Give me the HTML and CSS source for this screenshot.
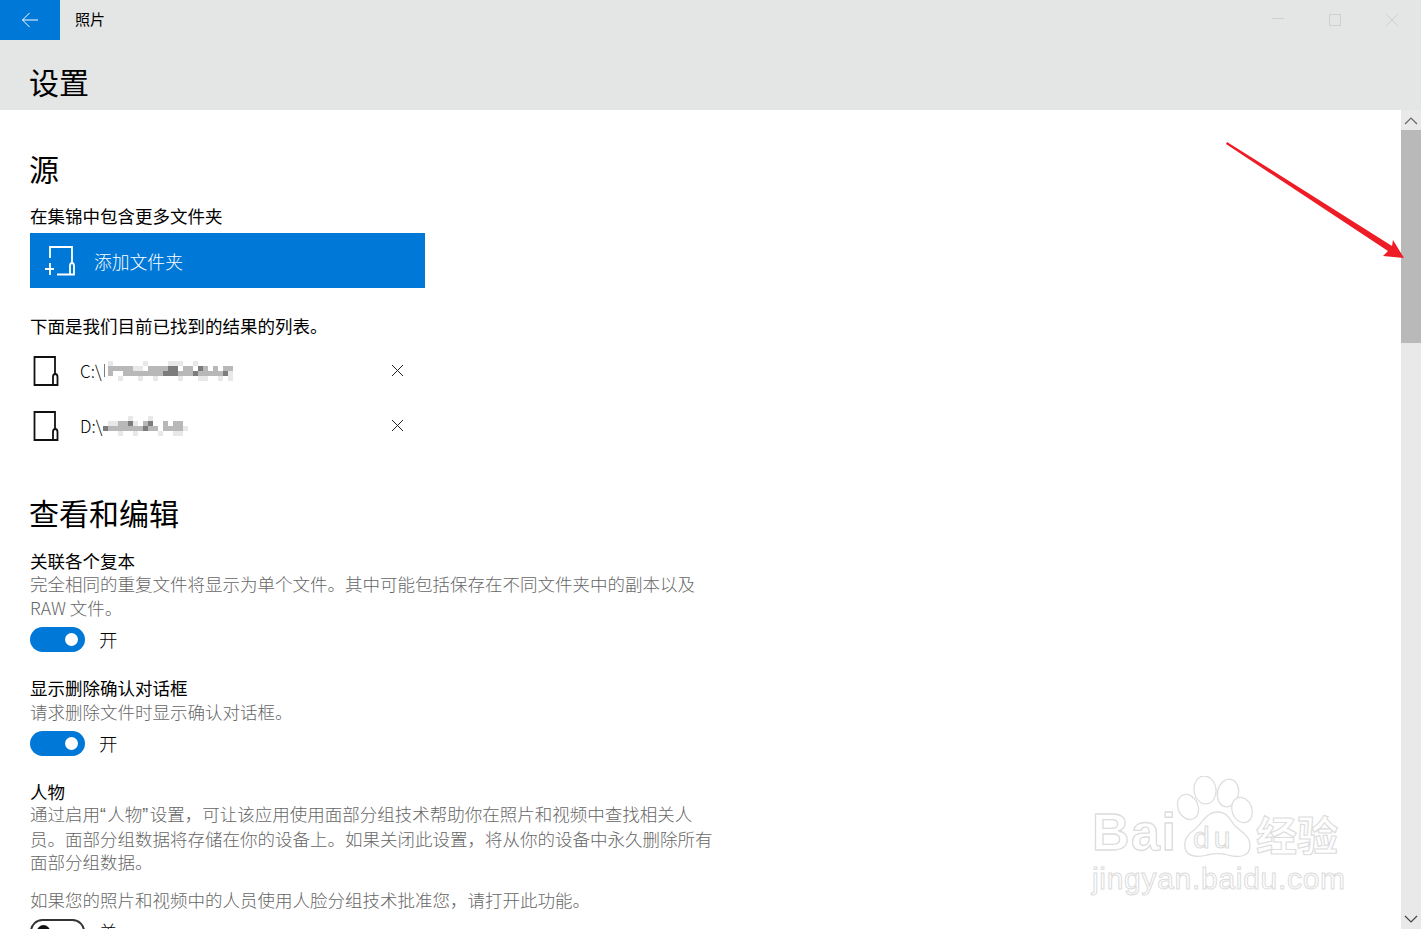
FILE: index.html
```html
<!DOCTYPE html>
<html lang="zh-CN">
<head>
<meta charset="utf-8">
<title>照片 设置</title>
<link rel="stylesheet" href="styles.css">
</head>
<body>
<div class="app">
  <header class="chrome">
    <div class="titlebar">
      <button class="back" aria-label="返回">
        <svg width="18" height="16" viewBox="0 0 18 16"><path d="M8.500 1 1.500 8l7 7M1.500 8H17" fill="none" stroke="#fff" stroke-width="1"/></svg>
      </button>
      <span class="app-name">照片</span>
      <div class="win-controls">
        <svg width="14" height="14" viewBox="0 0 14 14"><path d="M1 5.500H13" stroke="#cfcfcf" fill="none"/></svg>
        <svg width="14" height="14" viewBox="0 0 14 14"><rect x="1.500" y="1.500" width="11" height="11" stroke="#cfcfcf" fill="none"/></svg>
        <svg width="14" height="14" viewBox="0 0 14 14"><path d="M1 1 13 13M13 1 1 13" stroke="#cfcfcf" fill="none"/></svg>
      </div>
    </div>
    <h1 class="page-title">设置</h1>
  </header>
  <div class="body">
    <main class="content">
      <h2 class="section-title first">源</h2>
      <p class="label include-label">在集锦中包含更多文件夹</p>
      <button class="add-folder">
        <svg width="32" height="32" viewBox="0 0 32 32"><path d="M6 13V2H28V17M1 24H10M6 18V30M13 29.500H26M26 29.500V21C26 17 30 17 30 21V29.500H26" fill="none" stroke="#fff" stroke-width="1.800"/></svg>
        <span>添加文件夹</span>
      </button>
      <p class="label found-label">下面是我们目前已找到的结果的列表。</p>
      <ul class="folders">
        <li class="folder">
          <svg class="folder-icon" width="26" height="32" viewBox="0 0 26 32"><path d="M20 30H1.500V2H22V19M20 30V22C20 18 24.500 18 24.500 22V30H20" fill="none" stroke="#111" stroke-width="1.800"/></svg>
          <span class="path">C:\</span>
          <svg class="mosaic" width="130" height="20" viewBox="-5 0 130 20" shape-rendering="crispEdges">
            <path class="m3" d="M-4 3h1v13h-1z"/>
            <path class="m1" d="M0 0h5v5h-5zM35 0h5v5h-5zM60 0h15v5h-15zM85 0h5v5h-5zM25 5h10v5h-10zM10 15h5v5h-5zM30 15h5v5h-5zM45 15h5v5h-5zM70 15h5v5h-5zM90 15h10v5h-10zM110 15h5v5h-5zM120 10h5v5h-5zM120 15h5v5h-5z"/>
            <path class="m2" d="M0 5h25v5h-25zM40 5h20v5h-20zM75 5h10v5h-10zM95 5h5v5h-5zM105 5h5v5h-5zM115 5h10v5h-10zM0 10h5v5h-5zM15 10h40v5h-40zM70 10h15v5h-15zM90 10h25v5h-25z"/>
            <path class="m3" d="M60 5h10v5h-10zM90 5h5v5h-5zM55 10h15v5h-15zM85 10h5v5h-5zM115 10h5v5h-5z"/>
          </svg>
          <svg class="remove" width="13" height="13" viewBox="0 0 13 13"><path d="M1 1 12 12M12 1 1 12" stroke="#222" fill="none"/></svg>
        </li>
        <li class="folder">
          <svg class="folder-icon" width="26" height="32" viewBox="0 0 26 32"><path d="M20 30H1.500V2H22V19M20 30V22C20 18 24.500 18 24.500 22V30H20" fill="none" stroke="#111" stroke-width="1.800"/></svg>
          <span class="path">D:\</span>
          <svg class="mosaic" width="85" height="20" viewBox="0 0 85 20" shape-rendering="crispEdges">
            <path class="m1" d="M25 0h5v5h-5zM45 0h5v5h-5zM5 5h10v5h-10zM30 5h5v5h-5zM15 15h5v5h-5zM30 15h5v5h-5zM55 15h5v5h-5zM70 15h10v5h-10zM80 10h5v5h-5z"/>
            <path class="m2" d="M15 5h10v5h-10zM40 5h5v5h-5zM60 5h5v5h-5zM70 5h10v5h-10zM5 10h25v5h-25zM30 10h10v5h-10zM45 10h10v5h-10zM60 10h20v5h-20z"/>
            <path class="m3" d="M0 10h5v5h-5zM25 5h5v5h-5zM40 10h5v5h-5zM45 5h5v5h-5zM55 10h5v5h-5zM55 15h5v-5h-5z"/>
          </svg>
          <svg class="remove" width="13" height="13" viewBox="0 0 13 13"><path d="M1 1 12 12M12 1 1 12" stroke="#222" fill="none"/></svg>
        </li>
      </ul>
      <h2 class="section-title view-title">查看和编辑</h2>

      <section class="setting">
        <p class="label">关联各个复本</p>
        <p class="desc">完全相同的重复文件将显示为单个文件。其中可能包括保存在不同文件夹中的副本以及 RAW 文件。</p>
        <div class="toggle-row"><span class="toggle on"></span><span class="state">开</span></div>
      </section>
      <section class="setting confirm">
        <p class="label">显示删除确认对话框</p>
        <p class="desc">请求删除文件时显示确认对话框。</p>
        <div class="toggle-row"><span class="toggle on"></span><span class="state">开</span></div>
      </section>
      <section class="setting people">
        <p class="label">人物</p>
        <p class="desc people-desc">通过启用<span class="quote">“</span>人物<span class="quote">”</span>设置，可让该应用使用面部分组技术帮助你在照片和视频中查找相关人员。面部分组数据将存储在你的设备上。如果关闭此设置，将从你的设备中永久删除所有面部分组数据。</p>
        <p class="desc note">如果您的照片和视频中的人员使用人脸分组技术批准您，请打开此功能。</p>
        <div class="toggle-row"><span class="toggle off"></span><span class="state">关</span></div>
      </section>
    </main>
    <aside class="scrollbar">
      <span class="arrow"><svg width="14" height="9" viewBox="0 0 14 9"><path d="M1 8 7 2l6 6" fill="none" stroke="#666" stroke-width="1.200"/></svg></span>
      <span class="thumb"></span>
      <span class="track"></span>
      <span class="arrow"><svg width="14" height="9" viewBox="0 0 14 9"><path d="M1 1l6 6 6-6" fill="none" stroke="#444" stroke-width="1.200"/></svg></span>
    </aside>
  </div>

  <svg class="red-arrow" width="190" height="130" viewBox="0 0 190 130">
    <path d="M1 0 166 104 167 98 178 116 157 114 162 109 0 2Z" fill="#ee1c25"/>
  </svg>

  <svg class="watermark" width="270" height="130" viewBox="0 0 270 130">
    <g fill="#fff" stroke="#dedede" stroke-width="1.300">
      <ellipse cx="123" cy="14" rx="11" ry="14" transform="rotate(-8 123 14)"/>
      <ellipse cx="146" cy="17" rx="10.500" ry="14" transform="rotate(12 146 17)"/>
      <ellipse cx="106" cy="31" rx="10" ry="13" transform="rotate(-25 106 31)"/>
      <ellipse cx="160" cy="34" rx="10" ry="13" transform="rotate(-20 160 34)"/>
      <path d="M135 36C124 36 120 48 112 54 104 59 102 66 103 72 105 82 118 81 125 79 133 77 139 77 146 79 156 82 168 81 168 70 168 60 160 56 153 50 148 44 146 36 135 36Z"/>
    </g>
    <text class="wm-big" x="10" y="74">Bai</text>
    <text class="wm-du" x="111" y="72">du</text>
    <text class="wm-cn" x="174" y="75">经验</text>
    <text class="wm-small" x="10" y="113">jingyan.baidu.com</text>
  </svg>
</div>
</body>
</html>
```

FILE: styles.css
```css
* { box-sizing: border-box; }
html, body { margin: 0; height: 100%; overflow: hidden; background: #fff; }
body {
  font-family: "Noto Sans CJK SC", "Liberation Sans", sans-serif;
  font-weight: 300;
  color: #000;
}
p, h1, h2, ul { margin: 0; padding: 0; font-weight: inherit; }
button { border: 0; padding: 0; font: inherit; color: inherit; }

.app { position: relative; width: 1421px; height: 929px; overflow: hidden; display: flex; flex-direction: column; }

.chrome { height: 110px; background: #e4e5e5; flex: none; }
.titlebar { height: 40px; display: flex; align-items: center; }
.back { width: 60px; height: 40px; background: #0078d7; display: flex; align-items: center; justify-content: center; }
.app-name { margin-left: 15px; font-size: 15px; line-height: 38px; padding-bottom: 2px; font-weight: 400; }
.win-controls { margin-left: auto; width: 150px; padding-right: 22px; display: flex; justify-content: space-between; align-items: center; }
.page-title { font-size: 30px; line-height: 42px; margin: 20px 0 0 29px; font-weight: 400; }

.body { flex: 1; display: flex; min-height: 0; }
.content { flex: 1; padding-left: 30px; overflow: hidden; }
.section-title { font-size: 30px; line-height: 40px; font-weight: 400; margin-left: -1px; }
.section-title.first { margin-top: 38px; }
.label { font-size: 17.5px; line-height: 24px; font-weight: 400; }
.include-label { margin-top: 16px; }
.add-folder {
  width: 395px; height: 55px; margin-top: 5px; background: #0078d7; color: #fff;
  display: flex; align-items: center; gap: 18px; padding-left: 14px;
  font-size: 17.8px; font-weight: 300;
}
.found-label { margin-top: 26px; }

.folders { list-style: none; margin-top: 5px; width: 380px; }
.folder { height: 55px; display: flex; align-items: center; }
.folder-icon { margin-left: 3px; flex: none; }
.path { margin-left: 21px; font-size: 17px; }
.mosaic { flex: none; margin-left: 1px; }
.m1 { fill: #e8e8e8; }
.m2 { fill: #b8b8b8; }
.m3 { fill: #7c7c7c; }
.remove { margin-left: auto; margin-right: 6px; flex: none; }

.view-title { margin-top: 39px; }
.setting { width: 690px; }
.setting .label { line-height: 23px; }
.setting.confirm .label { line-height: 24px; }
.setting.people .label { line-height: 21px; }
.view-title + .setting { margin-top: 17px; }
.desc { font-size: 17.5px; line-height: 23.6px; color: #666; }
.people-desc { line-height: 23px; }
.quote { font-family: "Liberation Sans", sans-serif; letter-spacing: 1.5px; }
.note { margin-top: 15px; }
.toggle-row { display: flex; align-items: center; gap: 14px; height: 32px; }
.state { font-size: 18.5px; }
.toggle { width: 55px; height: 25px; border-radius: 13px; position: relative; flex: none; }
.toggle::after { content: ""; position: absolute; top: 6px; width: 13px; height: 13px; border-radius: 50%; }
.toggle.on { background: #0078d7; }
.toggle.on::after { right: 7px; background: #fff; }
.toggle.off { border: 2px solid #333; }
.toggle.off::after { left: 5px; top: 4px; background: #111; }
.setting + .setting { margin-top: 20.5px; }
.setting.people { margin-top: 21.5px; }
.setting .toggle-row { margin-top: 4px; }

.scrollbar { width: 20px; flex: none; background: #e9e9e9; display: flex; flex-direction: column; }
.arrow { height: 20px; display: flex; align-items: center; justify-content: center; flex: none; }
.thumb { height: 213px; background: #b9b9b9; flex: none; }
.track { flex: 1; }

.red-arrow { position: absolute; left: 1226px; top: 142px; }
.watermark { position: absolute; left: 1082px; top: 776px; }
.wm-big, .wm-du, .wm-cn, .wm-small { fill: #fff; stroke: #dcdcdc; font-family: "Liberation Sans", sans-serif; }
.wm-big { font-size: 52px; font-weight: 700; stroke-width: 1.300; letter-spacing: 1.500px; }
.wm-du { font-size: 30px; stroke-width: 1.100; letter-spacing: 4px; }
.wm-cn { font-size: 41px; font-weight: 700; stroke-width: 1.100; font-family: "Noto Sans CJK SC", sans-serif; }
.wm-small { font-size: 30px; stroke-width: 1; letter-spacing: .7px; }
```
